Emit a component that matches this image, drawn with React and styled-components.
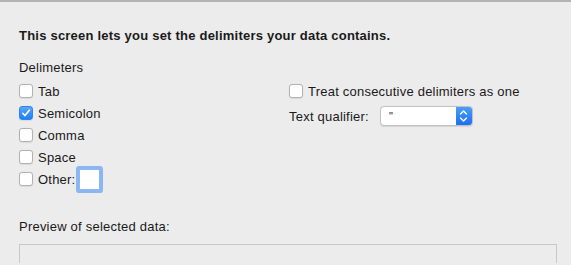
import styled, { createGlobalStyle } from "styled-components"

const GlobalStyle = createGlobalStyle`
    body {
        margin: 0;
        background: #ececec;
        font-family: "Liberation Sans", Arial, sans-serif;
        font-size: 13px;
        letter-spacing: 0.22px;
        color: #1a1a1a;
    }
`

const delimiters = [
    { label: "Tab", checked: false },
    { label: "Semicolon", checked: true },
    { label: "Comma", checked: false },
    { label: "Space", checked: false },
]

const Check = ({ checked }) => (
    <Box checked={checked}>
        {checked && (
            <svg width="10" height="10" viewBox="0 0 10 10">
                <path d="M1.8 5.3 L4 7.6 L8.3 2.2" fill="none" stroke="white" strokeWidth="1.6" strokeLinecap="round" strokeLinejoin="round" />
            </svg>
        )}
    </Box>
)

const App = () => {
    return (
        <Container>
            <GlobalStyle />
            <Intro>This screen lets you set the delimiters your data contains.</Intro>
            <Columns>
                <Left>
                    <Title>Delimeters</Title>
                    {delimiters.map((d) => (
                        <Row key={d.label}>
                            <Check checked={d.checked} />
                            <Label>{d.label}</Label>
                        </Row>
                    ))}
                    <Row>
                        <Check />
                        <Label>Other:</Label>
                        <OtherInput />
                    </Row>
                </Left>
                <Right>
                    <Row>
                        <Check />
                        <Label>Treat consecutive delimiters as one</Label>
                    </Row>
                    <QualifierRow>
                        <span>Text qualifier:</span>
                        <Select>
                            <SelectValue>"</SelectValue>
                            <Stepper>
                                <svg width="9" height="14" viewBox="0 0 9 14">
                                    <path d="M1.5 5 L4.5 2 L7.5 5 M1.5 9 L4.5 12 L7.5 9" fill="none" stroke="white" strokeWidth="1.4" strokeLinecap="round" strokeLinejoin="round" />
                                </svg>
                            </Stepper>
                        </Select>
                    </QualifierRow>
                </Right>
            </Columns>
            <PreviewLabel>Preview of selected data:</PreviewLabel>
            <Preview />
        </Container>
    )
}

export default App

const Container = styled.div`
    width: 571px;
    height: 263px;
    border-top: 2px solid #b4b4b4;
    padding: 26px 0 0 19px;
    box-sizing: border-box;
    overflow: hidden;
`
const Intro = styled.div`
    font-weight: bold;
    line-height: 16px;
`
const Columns = styled.div`
    display: flex;
    margin-top: 16px;
`
const Left = styled.div`
    width: 270px;
    display: flex;
    flex-direction: column;
`
const Right = styled.div`
    display: flex;
    flex-direction: column;
    padding-top: 20px;
`
const Title = styled.div`
    line-height: 16px;
    margin-bottom: 4px;
`
const Row = styled.div`
    display: flex;
    align-items: center;
    height: 22px;
`
const Box = styled.div`
    width: 14px;
    height: 14px;
    box-sizing: border-box;
    border-radius: 3px;
    display: flex;
    align-items: center;
    justify-content: center;
    background: ${(p) => (p.checked ? "linear-gradient(#5aa6fb, #1f7ff5)" : "#fff")};
    border: 1px solid ${(p) => (p.checked ? "#2f85ee" : "#b2b2b2")};
    box-shadow: 0 0.5px 1px rgba(0, 0, 0, 0.08);
`
const Label = styled.span`
    margin-left: 5px;
`
const OtherInput = styled.div`
    width: 19px;
    height: 19px;
    margin-left: 4px;
    background: #fff;
    border: 1px solid #8fb8ee;
    box-shadow: 0 0 0 3px #8ab7f4;
    border-radius: 1px;
`
const QualifierRow = styled.div`
    display: flex;
    align-items: center;
    gap: 11px;
    height: 22px;
    margin-top: 3px;
`
const Select = styled.div`
    width: 93px;
    height: 20px;
    box-sizing: border-box;
    display: flex;
    background: #fff;
    border: 1px solid #c2c2c2;
    border-radius: 4px;
    overflow: hidden;
    box-shadow: 0 0.5px 1px rgba(0, 0, 0, 0.1);
`
const SelectValue = styled.div`
    flex: 1;
    padding-left: 8px;
    line-height: 18px;
    font-size: 11px;
`
const Stepper = styled.div`
    width: 16px;
    display: flex;
    align-items: center;
    justify-content: center;
    background: linear-gradient(#4c9cfa, #1b70f3);
`
const PreviewLabel = styled.div`
    margin-top: 29px;
    line-height: 16px;
`
const Preview = styled.div`
    margin-top: 9px;
    width: 538px;
    height: 40px;
    box-sizing: border-box;
    border: 1px solid #c8c8c8;
`
